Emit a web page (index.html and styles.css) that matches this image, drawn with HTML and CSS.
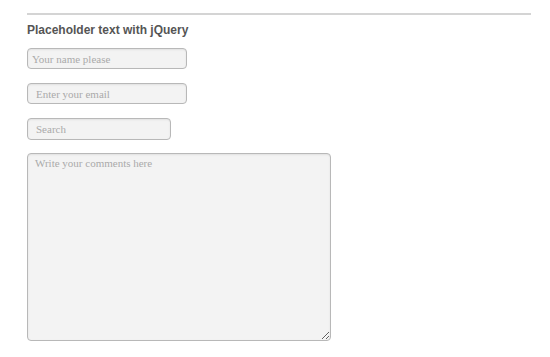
FILE: index.html
```html
<!DOCTYPE html>
<html lang="en">
<head>
  <meta charset="UTF-8">
  <title>Placeholder text with jQuery</title>
  <link rel="stylesheet" href="styles.css">
</head>
<body>
  <div class="container">
    <hr class="rule">
    <h2>Placeholder text with jQuery</h2>
    <form class="demo-form">
      <input type="text" class="field name" placeholder="Your name please">
      <input type="text" class="field" placeholder="Enter your email">
      <input type="text" class="field search" placeholder="Search">
      <textarea class="field comments" placeholder="Write your comments here"></textarea>
    </form>
  </div>
</body>
</html>
```

FILE: styles.css
```css
body {
  margin: 0;
  background-color: white;
  font-family: "Liberation Sans", Arial, sans-serif;
}

.container {
  padding: 13px 19px 0 27px;
}

.rule {
  margin: 0;
  border: 0;
  border-top: 2px solid #d4d4d4;
}

h2 {
  margin: 8px 0 10px 0;
  font-size: 12px;
  line-height: 15px;
  color: #555;
}

.demo-form {
  display: flex;
  flex-direction: column;
  align-items: flex-start;
  gap: 14px;
}

.field {
  box-sizing: border-box;
  width: 160px;
  height: 21px;
  margin: 0;
  padding: 0 8px;
  border: 1px solid #b8b8b8;
  border-radius: 4px;
  background-color: #f3f3f3;
  box-shadow: inset 0 1px 2px rgba(0, 0, 0, 0.08);
  font-family: "Liberation Serif", "Times New Roman", serif;
  font-size: 11px;
  color: #333;
}

.field::placeholder {
  color: #aaa;
}

.name {
  padding-left: 4px;
}

.search {
  width: 144px;
  height: 22px;
}

.comments {
  width: 304px;
  height: 188px;
  margin-top: -1px;
  padding: 3px 7px;
  resize: both;
}
```
